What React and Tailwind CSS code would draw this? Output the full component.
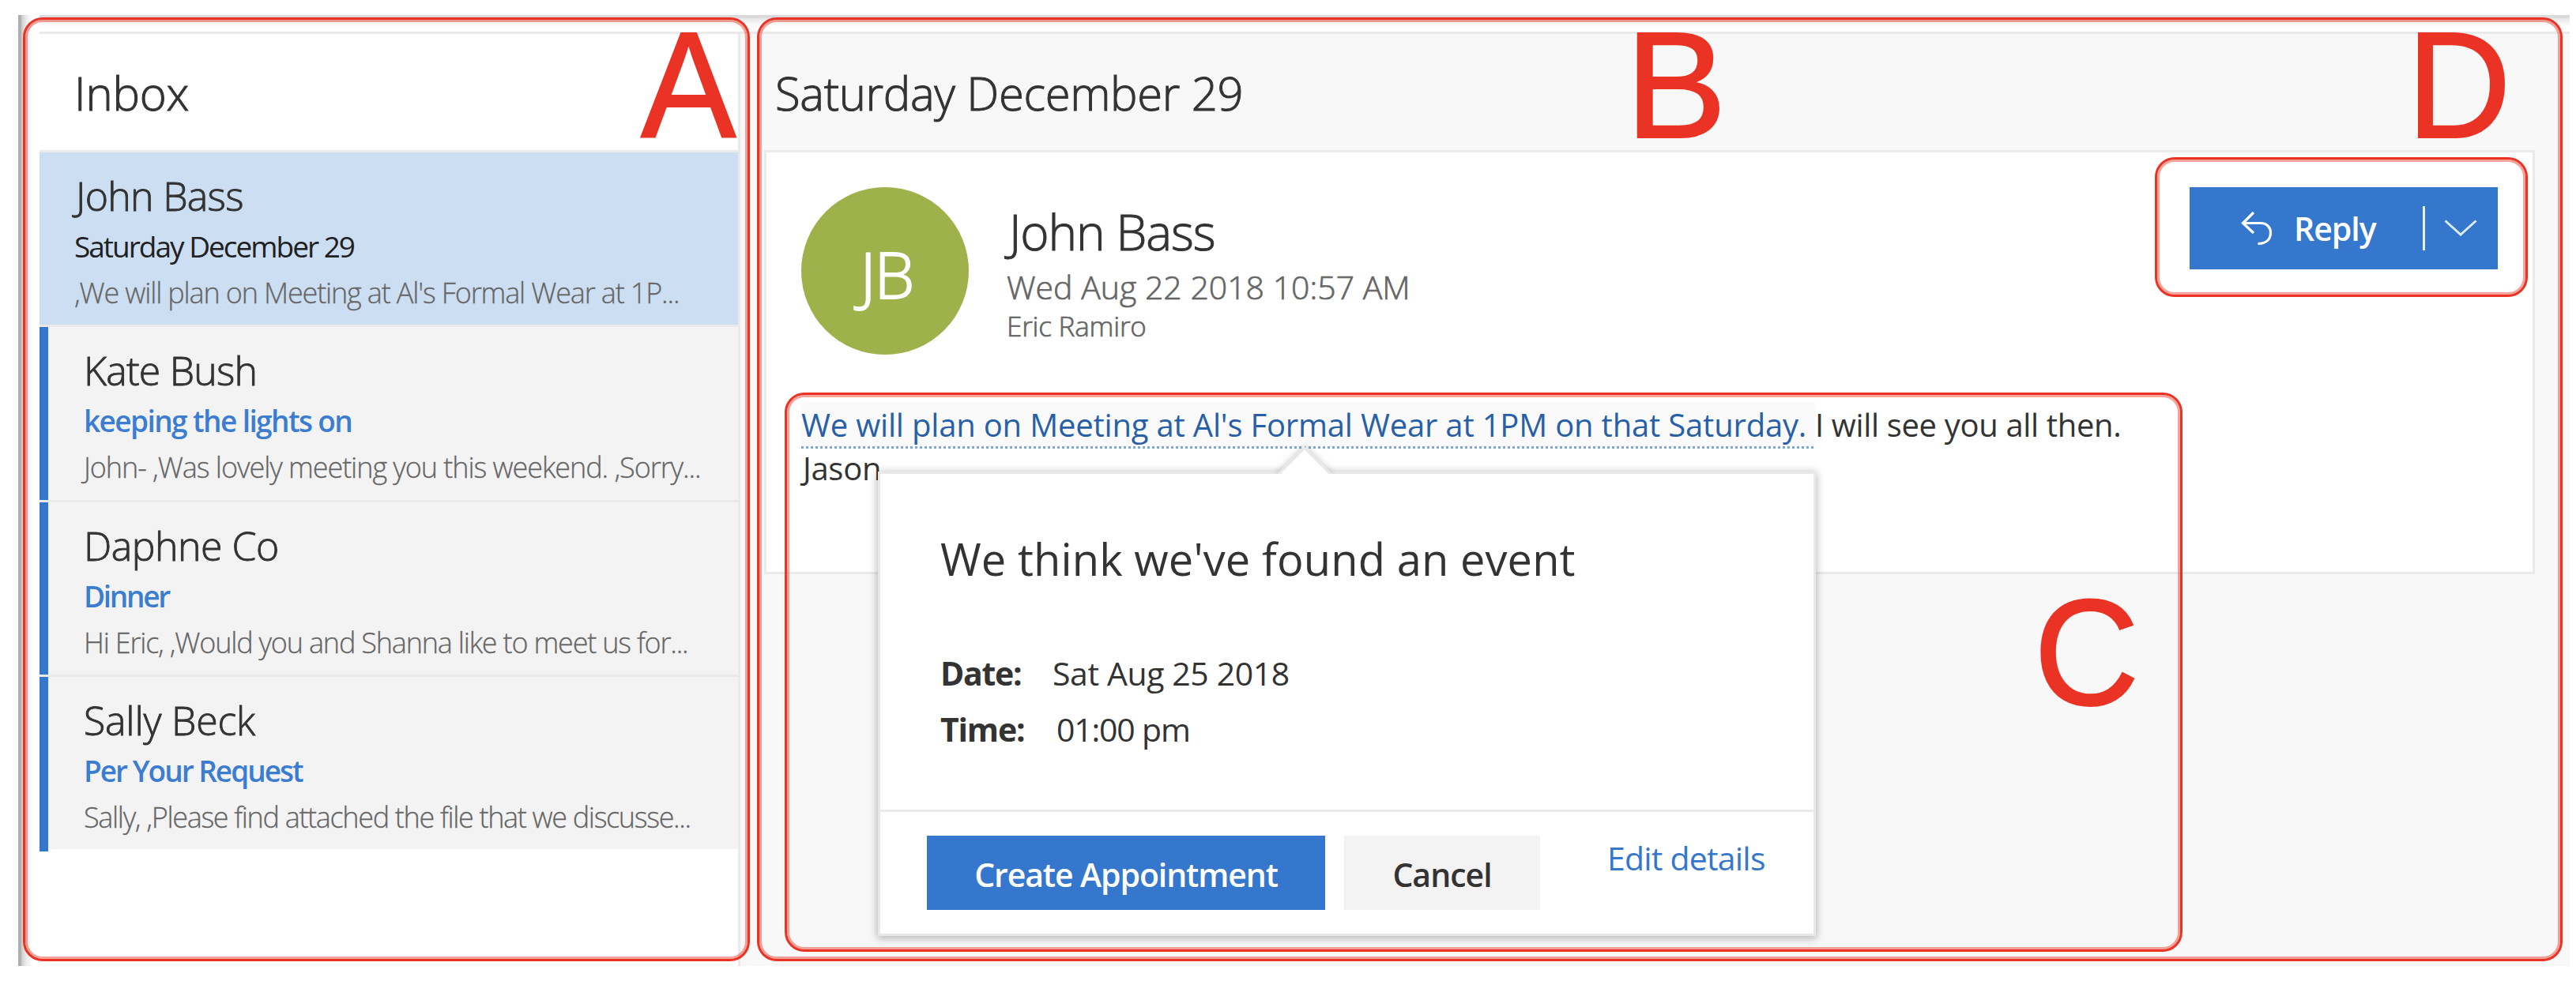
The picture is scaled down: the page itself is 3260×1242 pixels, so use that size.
const messages = [
  {
    name: "John Bass", nameTrack: "tracking-[-0.7px]",
    subject: "Saturday December 29", subjectTrack: "tracking-[-2px]",
    preview: ",We will plan on Meeting at Al's Formal Wear at 1P...", previewTrack: "tracking-[-1.16px]",
    height: "h-[221px]", selected: true,
  },
  {
    name: "Kate Bush", nameTrack: "tracking-[-0.8px]",
    subject: "keeping the lights on", subjectTrack: "tracking-[-1.6px]",
    preview: "John- ,Was lovely meeting you this weekend. ,Sorry...", previewTrack: "tracking-[-1.06px]",
    height: "h-[222px]",
  },
  {
    name: "Daphne Co", nameTrack: "tracking-[-0.5px]",
    subject: "Dinner", subjectTrack: "tracking-[-2.3px]",
    preview: "Hi Eric, ,Would you and Shanna like to meet us for...", previewTrack: "tracking-[-1.2px]",
    height: "h-[221px]",
  },
  {
    name: "Sally Beck", nameTrack: "tracking-[-0.2px]",
    subject: "Per Your Request", subjectTrack: "tracking-[-2px]",
    preview: "Sally, ,Please find attached the file that we discusse...", previewTrack: "tracking-[-1.33px]",
    height: "h-[221px]", last: true,
  },
];

function MessageRow({ m }) {
  return (
    <li className={`flex ${m.height}`}>
      {!m.selected && (
        <div className={`w-[11px] shrink-0 bg-[#3477cc] ${m.last ? "" : "border-b-3 border-[#eaeaea]"}`} />
      )}
      <div
        className={`min-w-0 flex-1 border-b-3 pt-[25px] ${m.selected ? "bg-[#ccdef2] pl-11" : "bg-[#f3f3f3] pl-[45px]"} ${m.last ? "border-white" : "border-[#eaeaea]"}`}
      >
        <div className={`text-[50px] leading-[60px] font-light text-[#333] [-webkit-text-stroke:0.9px] ${m.selected ? "pl-0.5" : ""} ${m.nameTrack}`}>
          {m.name}
        </div>
        <div
          className={`text-[37px] leading-[67px] ${m.subjectTrack} ${m.selected ? "font-normal text-[#212121]" : "font-semibold text-[#3b7dd0]"}`}
        >
          {m.subject}
        </div>
        <div className={`text-[36px] leading-[51px] font-light text-[#666] [-webkit-text-stroke:0.3px] ${m.previewTrack}`}>{m.preview}</div>
      </div>
    </li>
  );
}

function MessageList() {
  return (
    <section className="w-[887px] shrink-0 border-r-3 border-[#eaeaea] bg-white">
      <h2 className="h-[150px] border-b-3 border-[#eaeaea] pl-11 text-[58px] leading-[149px] font-light tracking-[-0.2px] text-[#333] [-webkit-text-stroke:1px]">
        Inbox
      </h2>
      <ul>
        {messages.map((m) => (
          <MessageRow key={m.name} m={m} />
        ))}
      </ul>
    </section>
  );
}

function ReplyButton() {
  return (
    <button className="flex h-[104px] w-[390px] items-center bg-[#3477cc] text-white">
      <svg className="ml-[64px] h-[44px] w-[42px]" viewBox="0 0 42 44" fill="none" stroke="currentColor" strokeWidth="3.2">
        <path d="M17 2 L3.5 15.5 L17 28" />
        <path d="M3.5 15.5 H26 C34 15.5 38.5 21 38.5 27.5 C38.5 36 33 41.5 22.5 41.5" />
      </svg>
      <span className="ml-[26px] text-[41px] leading-[106px] font-semibold tracking-[-1px]">Reply</span>
      <span className="ml-auto h-14 w-[3px] bg-[#e6eefa]" />
      <svg className="mr-[26px] ml-6 h-[22px] w-[42px]" viewBox="0 0 42 22" fill="none" stroke="#dcecfb" strokeWidth="3">
        <path d="M1.5 1.5 L21 19 L40.5 1.5" />
      </svg>
    </button>
  );
}

function EventCard() {
  return (
    <div className="absolute top-[88px] left-[97px] z-10 w-[1187px] border-3 border-[#e8e8e8] bg-white text-[#333] shadow-[0_2px_10px_1px_rgba(0,0,0,0.28)]">
      <div className="absolute -top-[43px] left-[480px] h-[43px] w-[114px] overflow-hidden">
        <div className="mx-auto mt-[18px] size-[48px] rotate-45 border-3 border-[#e8e8e8] bg-white shadow-[0_0_8px_rgba(0,0,0,0.25)]" />
      </div>
      <div className="h-[425px] pt-[67px] pl-[76px]">
        <h3 className="mb-[70px] text-[56px] leading-[80px] tracking-[0.1px]">We think we've found an event</h3>
        <div className="flex text-[41px] leading-[71px]">
          <span className="w-[142px] font-bold tracking-[-1.3px]">Date:</span>
          <span className="tracking-[-0.4px]">Sat Aug 25 2018</span>
        </div>
        <div className="flex text-[41px] leading-[71px]">
          <span className="w-[147px] font-bold tracking-[-1.2px]">Time:</span>
          <span className="tracking-[-1.2px]">01:00 pm</span>
        </div>
      </div>
      <div className="flex gap-6 border-t-3 border-[#eaeaea] py-[30px] pl-[59px]">
        <button className="h-[94px] w-[504px] bg-[#3477cc] text-[41px] leading-[98px] font-semibold tracking-[-1.1px] text-white">
          Create Appointment
        </button>
        <button className="h-[94px] w-[248px] bg-[#f3f3f3] text-[41px] leading-[98px] font-semibold tracking-[-1px]">
          Cancel
        </button>
        <a className="ml-[61px] h-[56px] text-[41px] leading-[56px] tracking-[-0.8px] text-[#3477cc]">Edit details</a>
      </div>
    </div>
  );
}

function ReadingPane() {
  return (
    <section className="min-w-0 flex-1 bg-[#f8f8f8] pl-[30px]">
      <h1 className="h-[147px] pl-[14px] text-[58px] leading-[149px] font-light tracking-[-0.35px] text-[#333] [-webkit-text-stroke:1px]">
        Saturday December 29
      </h1>
      <article className="h-[537px] w-[2241px] border-3 border-[#eaeaea] bg-white p-11">
        <header className="flex h-[212px]">
          <div className="size-[212px] rounded-full bg-[#9fb14a] pl-1 text-center text-[81px] leading-[219px] font-light tracking-[-2px] text-white [-webkit-text-stroke:1.8px]">
            JB
          </div>
          <div className="flex-1 pt-[14px] pl-12">
            <div className="pl-[3px] text-[62px] leading-[84px] font-light tracking-[-1.1px] text-[#333] [-webkit-text-stroke:1px]">
              John Bass
            </div>
            <div className="text-[41px] leading-[56px] font-light text-[#666] [-webkit-text-stroke:0.7px]">Wed Aug 22 2018 10:57 AM</div>
            <div className="text-[35px] leading-[43px] font-light tracking-[-0.2px] text-[#666] [-webkit-text-stroke:0.7px]">Eric Ramiro</div>
          </div>
          <ReplyButton />
        </header>
        <div className="relative mt-[60px] text-[40px] text-[#333]">
          <div className="flex">
            <div className="w-[1283px] text-[#2860a8]">
              <a className="block h-14 bg-[#fafafa] leading-[58px] tracking-[-0.19px]">
                We will plan on Meeting at Al's Formal Wear at 1PM on that Saturday.
              </a>
              <div className="h-[3px] bg-[repeating-linear-gradient(90deg,#80a7cc_0_3px,#ffffff_3px_6px)]" />
            </div>
            <span className="leading-[58px] tracking-[-0.35px]">I will see you all then.</span>
          </div>
          <div className="pl-0.5 leading-[50px] tracking-[-0.3px]">Jason</div>
          <EventCard />
        </div>
      </article>
    </section>
  );
}

function Callout({ className }) {
  return (
    <div className={`absolute rounded-[25px] border-3 border-[#ea3324] ${className}`}>
      <div className="h-full rounded-[22px] border-3 border-[#ea3324]/45" />
    </div>
  );
}

function CalloutLetter({ className, children }) {
  return (
    <span className={`absolute origin-left font-['Liberation_Sans',sans-serif] text-[192px] leading-[216px] text-[#ea3324] [-webkit-text-stroke:2px] ${className}`}>
      {children}
    </span>
  );
}

export default function App() {
  return (
    <main className="relative h-[1242px] w-[3260px] overflow-hidden bg-white pt-[19px] pl-[23px] font-['Open_Sans','Noto_Sans',sans-serif] whitespace-nowrap">
      <div className="flex h-[1204px] w-[3229px]">
        <div className="w-[27px] shrink-0 bg-[linear-gradient(90deg,#aeaeae_0_3px,#d2d2d2_5px,#efefef_11px,#fff_18px)]" />
        <div className="flex min-w-0 flex-1 flex-col">
          <div className="h-[21px] shrink-0 bg-[linear-gradient(180deg,#dadada_0_3px,#e8e8e8_5px,#f8f8f8_11px,#fff_16px)]" />
          <div className="flex min-h-0 flex-1 border-t-3 border-[#eaeaea]">
            <MessageList />
            <ReadingPane />
          </div>
        </div>
      </div>
      <Callout className="top-[22px] left-[29px] h-[1195px] w-[920px]" />
      <Callout className="top-[22px] left-[958px] h-[1195px] w-[2285px]" />
      <Callout className="top-[497px] left-[993px] h-[708px] w-[1769px]" />
      <Callout className="top-[199px] left-[2727px] h-[177px] w-[472px]" />
      <CalloutLetter className="top-0 left-[811px] scale-x-[0.94]">A</CalloutLetter>
      <CalloutLetter className="top-0 left-[2057px]">B</CalloutLetter>
      <CalloutLetter className="top-[718px] left-[2574px] scale-x-[0.96]">C</CalloutLetter>
      <CalloutLetter className="top-0 left-[3046px] scale-x-[0.95]">D</CalloutLetter>
    </main>
  );
}
